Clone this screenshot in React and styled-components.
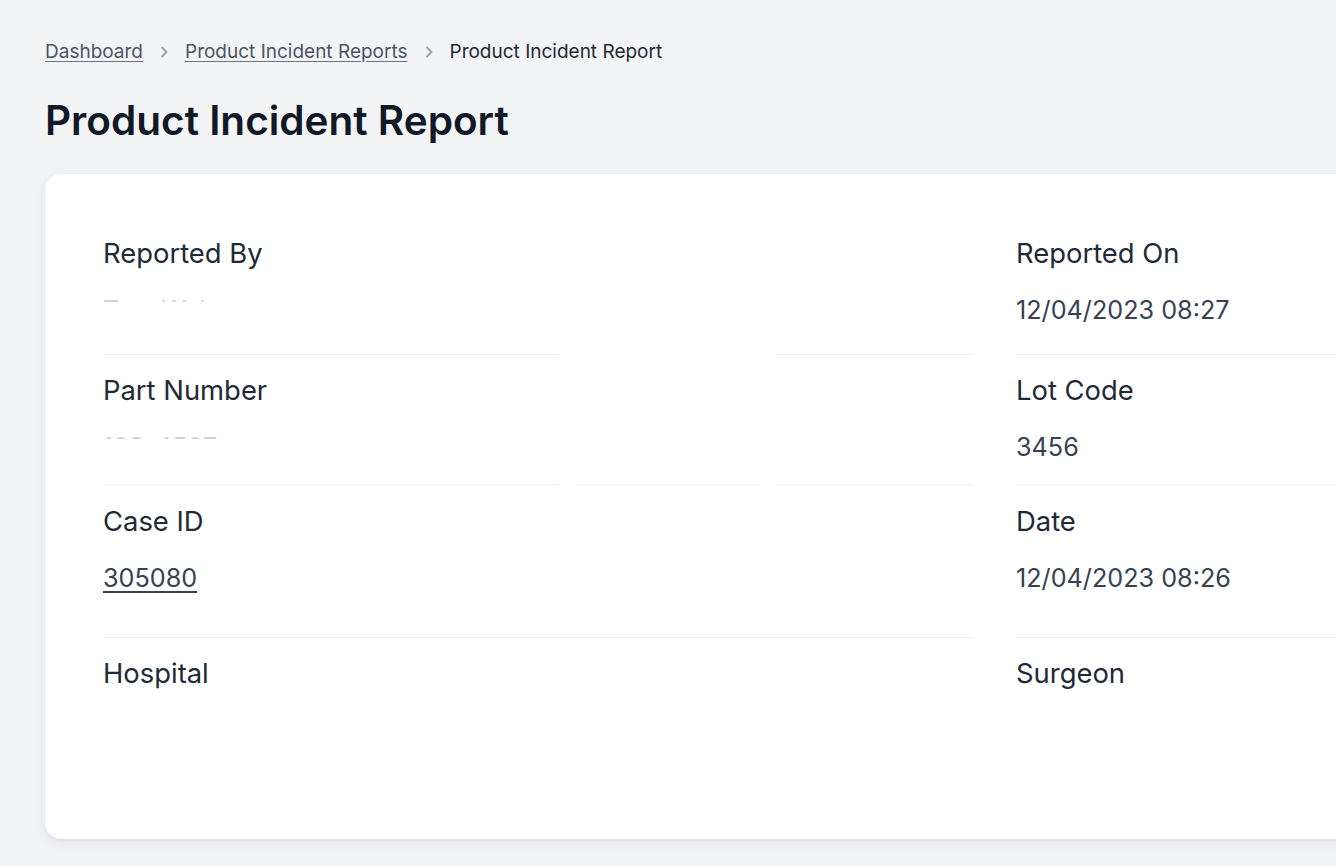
import React from "react";
import styled, { createGlobalStyle } from "styled-components";

const Global = createGlobalStyle`
  html, body {
    margin: 0;
    padding: 0;
    overflow: hidden;
    background: #f3f4f6;
  }
  body {
    font-family: Inter, "Noto Sans", sans-serif;
    color: #111827;
  }
`;

const Page = styled.div`
  padding: 38px 0 0 45px;
  min-height: 100vh;
  box-sizing: border-box;
`;

const Crumbs = styled.nav`
  display: flex;
  align-items: center;
  gap: 16px;
  font-size: 19px;
  line-height: 27px;
  white-space: nowrap;
`;

const CrumbLink = styled.a`
  color: #4b5563;
  text-decoration: underline;
  text-underline-offset: 3px;
  text-decoration-color: #6b7280;
`;

const CrumbCurrent = styled.span`
  color: #1f2937;
`;

const Chevron = () => (
  <svg width="10" height="14" viewBox="0 0 10 14" fill="none">
    <path d="M3 2.5 L7.5 7 L3 11.5" stroke="#9ca3af" strokeWidth="2" strokeLinecap="round" strokeLinejoin="round" />
  </svg>
);

const Title = styled.h1`
  margin: 34px 0 31px;
  font-size: 40.5px;
  line-height: 44px;
  font-weight: 600;
  color: #111827;
  white-space: nowrap;
`;

const Card = styled.section`
  width: 1899px;
  box-sizing: border-box;
  background: #ffffff;
  border-radius: 16px;
  box-shadow: 0 4px 14px rgba(17, 24, 39, 0.08), 0 1px 3px rgba(17, 24, 39, 0.05);
  padding: 60px 58px 0;
  height: 665px;
`;

const Grid = styled.div`
  display: grid;
  grid-template-columns: 870px 870px;
  column-gap: 43px;
`;

const Field = styled.div`
  display: flex;
  flex-direction: column;
  padding-top: ${(p) => p.$pt}px;
`;

const Label = styled.div`
  font-size: 27.4px;
  line-height: 39px;
  color: #1f2937;
`;

const Value = styled.div`
  margin-top: 18px;
  font-size: 25.2px;
  line-height: 39px;
  min-height: 39px;
  color: #374151;
  margin-bottom: ${(p) => p.$pb}px;
  white-space: nowrap;
`;

const Hidden = styled.span`
  display: block;
  color: #cfd3d9;
  clip-path: inset(0 0 28px 0);
`;

const CaseLink = styled.a`
  color: #374151;
  text-decoration: underline;
  text-underline-offset: 4px;
  text-decoration-thickness: 1.5px;
`;

const Rule = styled.div`
  display: flex;
  gap: 16.5px;
  height: 1px;
`;

const Seg = styled.div`
  flex: ${(p) => p.$w} 0 0;
  background: ${(p) => (p.$on ? "#eeeff2" : "transparent")};
`;

const rows = [
  {
    pt: 0,
    pb: 24,
    left: { label: "Reported By", value: <Hidden>Tom Walsen</Hidden> },
    right: { label: "Reported On", value: "12/04/2023 08:27" },
    parts: [
      [456, true],
      [184, false],
      [197, true],
    ],
  },
  {
    pt: 16,
    pb: 17,
    left: { label: "Part Number", value: <Hidden>123-4567</Hidden> },
    right: { label: "Lot Code", value: "3456" },
    parts: [
      [456, true],
      [184, true],
      [197, true],
    ],
  },
  {
    pt: 17,
    pb: 39,
    left: { label: "Case ID", value: <CaseLink href="#">305080</CaseLink> },
    right: { label: "Date", value: "12/04/2023 08:26" },
    parts: [[870, true]],
  },
  {
    pt: 16,
    pb: 0,
    left: { label: "Hospital", value: "" },
    right: { label: "Surgeon", value: "" },
    parts: null,
  },
];

export default function App() {
  return (
    <>
      <Global />
      <Page>
        <Crumbs>
          <CrumbLink href="#">Dashboard</CrumbLink>
          <Chevron />
          <CrumbLink href="#">Product Incident Reports</CrumbLink>
          <Chevron />
          <CrumbCurrent>Product Incident Report</CrumbCurrent>
        </Crumbs>
        <Title>Product Incident Report</Title>
        <Card>
          <Grid>
            {rows.map((r, i) => (
              <React.Fragment key={i}>
                <div>
                  <Field $pt={r.pt}>
                    <Label>{r.left.label}</Label>
                    <Value $pb={r.pb}>{r.left.value}</Value>
                  </Field>
                  {r.parts && (
                    <Rule>
                      {r.parts.map(([w, on], j) => (
                        <Seg key={j} $w={w} $on={on} />
                      ))}
                    </Rule>
                  )}
                </div>
                <div>
                  <Field $pt={r.pt}>
                    <Label>{r.right.label}</Label>
                    <Value $pb={r.pb}>{r.right.value}</Value>
                  </Field>
                  {r.parts && (
                    <Rule>
                      <Seg $w={1} $on />
                    </Rule>
                  )}
                </div>
              </React.Fragment>
            ))}
          </Grid>
        </Card>
      </Page>
    </>
  );
}
